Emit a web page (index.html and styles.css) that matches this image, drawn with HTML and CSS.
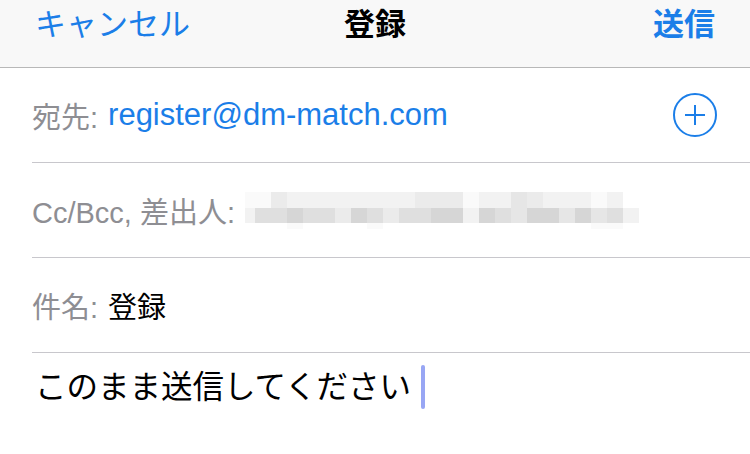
FILE: index.html
```html
<!DOCTYPE html>
<html lang="ja">
<head>
    <meta charset="utf-8">
    <title>登録</title>
    <link rel="stylesheet" href="styles.css">
</head>
<body>
    <div class="nav">
        <span class="nav-btn">キャンセル</span>
        <span class="nav-title">登録</span>
        <span class="nav-btn nav-send">送信</span>
    </div>
    <div class="field">
        <span class="label">宛先:</span>
        <span class="addr">register@dm-match.com</span>
        <svg class="add" width="44" height="44" viewBox="0 0 44 44">
            <circle cx="22" cy="22" r="21" fill="none" stroke="#1b7ee8" stroke-width="2"/>
            <path d="M22 12v20M12 22h20" stroke="#1b7ee8" stroke-width="2"/>
        </svg>
    </div>
    <div class="field">
        <span class="label">Cc/Bcc, 差出人:</span>
        <div class="mosaic">
            <span class="g0"></span><span class="g0"></span><span class="g2"></span><span class="g1"></span><span class="g1"></span><span class="g1"></span><span class="g1"></span><span class="g1"></span><span class="g1"></span><span class="g1"></span><span class="g1"></span><span class="g2"></span><span class="g2"></span><span class="g2"></span><span class="g0"></span><span class="g1"></span><span class="g1"></span><span class="g3"></span><span class="g2"></span><span class="g1"></span><span class="g1"></span><span class="g1"></span><span class="g0"></span><span class="g1"></span><span></span>
            <span class="g1"></span><span class="g4"></span><span class="g4"></span><span class="g5"></span><span class="g4"></span><span class="g4"></span><span class="g2"></span><span class="g5"></span><span class="g4"></span><span class="g2"></span><span class="g4"></span><span class="g4"></span><span class="g5"></span><span class="g5"></span><span class="g1"></span><span class="g5"></span><span class="g4"></span><span class="g3"></span><span class="g5"></span><span class="g5"></span><span class="g3"></span><span class="g5"></span><span class="g3"></span><span class="g4"></span><span class="g1"></span>
            <span></span><span></span><span></span><span class="g0"></span><span></span><span></span><span></span><span></span><span class="g0"></span><span></span><span></span><span></span><span></span><span></span><span></span><span></span><span></span><span></span><span></span><span></span><span></span><span></span><span class="g0"></span><span class="g0"></span><span></span>
        </div>
    </div>
    <div class="field">
        <span class="label">件名:</span>
        <span class="subject">登録</span>
    </div>
    <div class="body-text">このまま送信してください<span class="cursor"></span></div>
</body>
</html>
```

FILE: styles.css
```css
body {
    margin: 0;
    background: #fff;
    font-family: "Liberation Sans", "Noto Sans CJK JP", sans-serif;
    font-size: 31px;
    color: #000;
}

.nav {
    display: grid;
    grid-template-columns: 1fr auto 1fr;
    align-items: start;
    height: 65px;
    padding: 2px 35px 0;
    background: #f8f8f8;
    border-bottom: 1px solid #b8b8b8;
    line-height: 46px;
}
.nav-btn {
    color: #1b7ee8;
}
.nav-title {
    font-weight: bold;
}
.nav-send {
    justify-self: end;
    font-weight: bold;
}

.field {
    display: flex;
    align-items: center;
    height: 94px;
    margin-left: 32px;
    padding-right: 33px;
    border-bottom: 1px solid #c8c7cc;
    font-size: 29px;
}
.label {
    color: #8e8e93;
    margin-right: 10px;
}
.addr {
    flex: 1;
    color: #1b7ee8;
    font-size: 31px;
}
.add {
    display: block;
}

.mosaic {
    display: grid;
    grid-template-columns: 10px repeat(24, 16px);
    grid-template-rows: 16px 15px 6px;
}
.g0 { background: #fafafa; }
.g1 { background: #f2f2f2; }
.g2 { background: #ebebeb; }
.g3 { background: #e6e6e6; }
.g4 { background: #dfdfdf; }
.g5 { background: #d6d6d6; }

.body-text {
    display: flex;
    align-items: center;
    padding: 12px 0 0 35px;
    font-size: 31.5px;
    line-height: 44px;
}
.cursor {
    width: 4px;
    height: 44px;
    margin-left: 10px;
    border-radius: 2px;
    background: #98a6f4;
}
```
